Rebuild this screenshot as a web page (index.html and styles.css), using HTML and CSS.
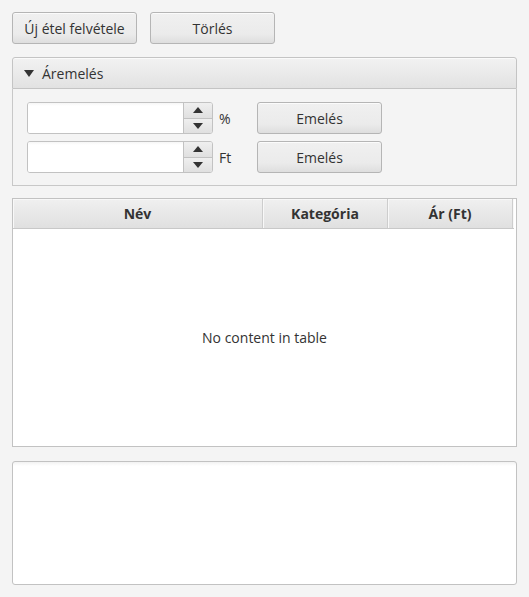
FILE: index.html
```html
<!DOCTYPE html>
<html lang="hu">
<head>
<meta charset="utf-8">
<title>Ételek</title>
<link rel="stylesheet" href="styles.css">
</head>
<body>
<div class="root">
  <div class="toolbar">
    <button class="btn">Új étel felvétele</button>
    <button class="btn">Törlés</button>
  </div>

  <div class="titled">
    <div class="titled-head">
      <svg class="arrow" width="10" height="7" viewBox="0 0 10 7"><path d="M0 0H10L5 7Z" fill="#333"/></svg>
      <span>Áremelés</span>
    </div>
    <div class="titled-body">
      <div class="row">
        <div class="spinner">
          <div class="spin-field"></div>
          <div class="spin-btns">
            <div class="spin-btn up"><svg width="10" height="6" viewBox="0 0 10 6"><path d="M0 6H10L5 0Z" fill="#333"/></svg></div>
            <div class="spin-btn down"><svg width="10" height="6" viewBox="0 0 10 6"><path d="M0 0H10L5 6Z" fill="#333"/></svg></div>
          </div>
        </div>
        <span class="unit">%</span>
        <button class="btn">Emelés</button>
      </div>
      <div class="row">
        <div class="spinner">
          <div class="spin-field"></div>
          <div class="spin-btns">
            <div class="spin-btn up"><svg width="10" height="6" viewBox="0 0 10 6"><path d="M0 6H10L5 0Z" fill="#333"/></svg></div>
            <div class="spin-btn down"><svg width="10" height="6" viewBox="0 0 10 6"><path d="M0 0H10L5 6Z" fill="#333"/></svg></div>
          </div>
        </div>
        <span class="unit">Ft</span>
        <button class="btn">Emelés</button>
      </div>
    </div>
  </div>

  <div class="table">
    <div class="thead">
      <div class="th c-nev">Név</div>
      <div class="th c-kat">Kategória</div>
      <div class="th c-ar">Ár (Ft)</div>
      <div class="th c-fill"></div>
    </div>
    <div class="tbody">No content in table</div>
  </div>

  <div class="textarea"></div>
</div>
</body>
</html>
```

FILE: styles.css
```css
* { box-sizing: border-box; }
html, body { margin: 0; padding: 0; }
body {
  background: #f4f4f4;
  font-family: "Open Sans", "Noto Sans", sans-serif;
  font-size: 14px;
  color: #333333;
}
.root {
  width: 529px;
  height: 597px;
  padding: 12px;
  display: flex;
  flex-direction: column;
}
.toolbar {
  display: flex;
  gap: 13px;
}
.btn {
  width: 125px;
  height: 32px;
  padding: 0;
  font: inherit;
  color: #333333;
  border: 1px solid #b5b5b5;
  border-radius: 3px;
  background: linear-gradient(to bottom, #f0f0f0 0%, #ebebeb 70%, #dedede 100%);
  box-shadow: inset 0 1px 0 #fbfbfb;
}
.titled {
  margin-top: 13px;
  display: flex;
  flex-direction: column;
}
.titled-head {
  height: 32px;
  border: 1px solid #c4c4c4;
  border-radius: 3px 3px 0 0;
  background: linear-gradient(to bottom, #f2f2f2, #e2e2e2);
  box-shadow: inset 0 1px 0 #fafafa;
  display: flex;
  align-items: center;
  padding-left: 11px;
  gap: 8px;
}
.titled-head .arrow { display: block; }
.titled-body {
  border: 1px solid #c8c8c8;
  border-top: none;
  padding: 13px 14px 12px 14px;
  display: flex;
  flex-direction: column;
  gap: 7px;
}
.row {
  display: flex;
  align-items: center;
}
.spinner {
  width: 186px;
  height: 32px;
  display: flex;
  border: 1px solid #c2c2c2;
  border-radius: 3px;
  background: #ffffff;
  overflow: hidden;
}
.spin-field {
  flex: 1;
  background: linear-gradient(to bottom, #f6f6f6 0, #ffffff 3px);
}
.spin-btns {
  width: 29px;
  display: flex;
  flex-direction: column;
  border-left: 1px solid #c2c2c2;
}
.spin-btn {
  flex: 1;
  display: flex;
  align-items: center;
  justify-content: center;
  background: linear-gradient(to bottom, #efefef, #e0e0e0);
}
.spin-btn svg { display: block; }
.spin-btn.up { border-bottom: 1px solid #c2c2c2; }
.unit {
  width: 44px;
  padding-left: 6px;
}
.table {
  margin-top: 12px;
  height: 250px;
  border: 1px solid #c2c2c2;
  background: #ffffff;
  display: flex;
  flex-direction: column;
}
.thead {
  height: 30px;
  display: flex;
  background: linear-gradient(to bottom, #f0f0f0, #e0e0e0);
  border-bottom: 1px solid #c8c8c8;
  margin-right: 2px;
}
.th {
  display: flex;
  align-items: center;
  justify-content: center;
  font-weight: bold;
  border-right: 1px solid #cdcdcd;
  box-shadow: inset 1px 1px 0 #f8f8f8;
}
.c-nev { width: 250px; }
.c-kat { width: 125px; }
.c-ar { width: 125px; }
.c-fill { flex: 1; border-right: none; }
.tbody {
  flex: 1;
  display: flex;
  align-items: center;
  justify-content: center;
}
.textarea {
  margin-top: 14px;
  height: 124px;
  border: 1px solid #c2c2c2;
  border-radius: 3px;
  background: linear-gradient(to bottom, #f2f2f2 0, #ffffff 4px);
}
```
